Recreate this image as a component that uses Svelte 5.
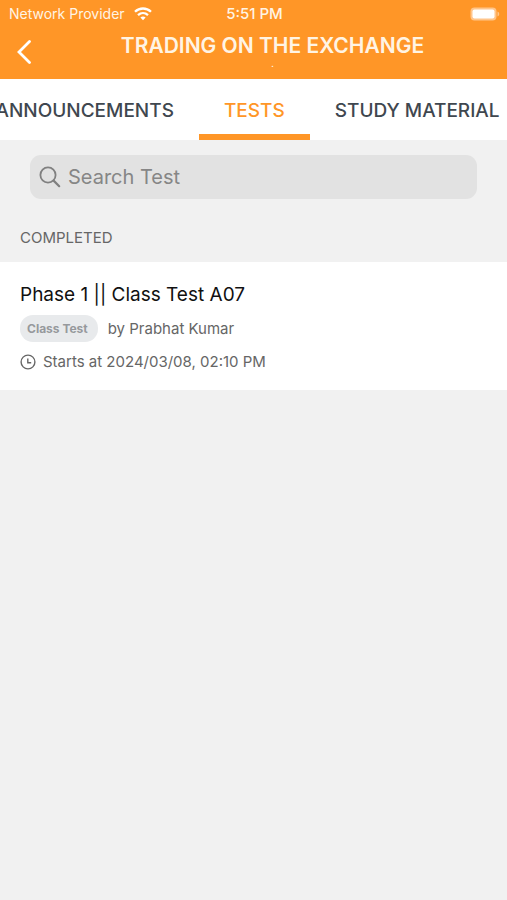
<script>
  let query = $state('')
  let active = $state('TESTS')

  const tabs = ['ANNOUNCEMENTS', 'TESTS', 'STUDY MATERIAL']

  const tests = [
    {
      title: 'Phase 1 || Class Test A07',
      kind: 'Class Test',
      author: 'Prabhat Kumar',
      starts: '2024/03/08, 02:10 PM'
    }
  ]
</script>

<div class="screen">
  <header>
    <div class="status">
      <div class="carrier">
        <span>Network Provider</span>
        <svg width="18" height="14" viewBox="0 0 18 14" aria-hidden="true">
          <g fill="none" stroke="currentColor" stroke-width="2.3">
            <path d="M1 4.8C5.5.4 12.5.4 17 4.8" />
            <path d="M4 8.1c2.9-2.7 7.1-2.7 10 0" />
          </g>
          <path fill="currentColor" d="M6.4 10.5c1.5-1.3 3.7-1.3 5.2 0L9 13.2z" />
        </svg>
      </div>
      <span class="time">5:51 PM</span>
      <svg class="battery" width="30" height="14" viewBox="0 0 30 14" aria-hidden="true">
        <rect x=".5" y=".5" width="26" height="13" rx="4" fill="#ffc58b" />
        <rect x="2.5" y="2.5" width="22" height="9" rx="2" fill="#fff" />
        <path d="M27.5 4.5c2.3 1 2.3 4 0 5z" fill="#ffc58b" />
      </svg>
    </div>
    <div class="bar">
      <button class="back" aria-label="Back">
        <svg width="16" height="24" viewBox="0 0 16 24" aria-hidden="true">
          <path d="M13.5 1.5 3 12l10.5 10.5" fill="none" stroke="currentColor" stroke-width="2.8" stroke-linecap="round" />
        </svg>
      </button>
      <div class="heading">
        <h1>TRADING ON THE EXCHANGE</h1>
        <span>.</span>
      </div>
    </div>
  </header>

  <nav>
    {#each tabs as tab}
      <button class:active={active === tab} onclick={() => { active = tab }}>{tab}</button>
    {/each}
  </nav>

  <main>
    <label class="search">
      <svg width="22" height="22" viewBox="0 0 22 22" aria-hidden="true">
        <g fill="none" stroke="currentColor" stroke-width="1.8" stroke-linecap="round">
          <circle cx="9" cy="9" r="7.6" />
          <path d="m14.6 14.6 5.6 5.6" stroke-width="2.2" />
        </g>
      </svg>
      <input type="text" placeholder="Search Test" aria-label="Search Test" bind:value={query} />
    </label>

    <h2>COMPLETED</h2>

    {#each tests as test}
      <article>
        <h3>{test.title}</h3>
        <div class="row">
          <span class="badge">{test.kind}</span>
          <span>by {test.author}</span>
        </div>
        <div class="row starts">
          <svg width="16" height="16" viewBox="0 0 16 16" aria-hidden="true">
            <g fill="none" stroke="currentColor" stroke-width="1.4">
              <circle cx="8" cy="8" r="6.9" />
              <path d="M7.8 4.6v4.1h3.4" />
            </g>
          </svg>
          <span>Starts at {test.starts}</span>
        </div>
      </article>
    {/each}
  </main>
</div>

<style>
  :global(body) {
    background: #f1f1f1;
  }

  .screen {
    font-family: Inter, 'Liberation Sans', sans-serif;
    overflow: hidden;
  }

  h1, h2, h3 {
    margin: 0;
    font-weight: 400;
  }

  button {
    font: inherit;
    border: 0;
    background: none;
    cursor: pointer;
  }

  svg {
    display: block;
    flex-shrink: 0;
  }

  header {
    background: #ff9627;
    color: #fff4e4;
  }

  .status {
    display: grid;
    grid-template-columns: 1fr auto 1fr;
    align-items: center;
    height: 27px;
    padding: 0 7px 0 9px;
    font-size: 14px;
  }

  .carrier {
    display: flex;
    align-items: center;
    gap: 9px;
  }

  .carrier svg {
    color: #fff;
  }

  .time {
    font-size: 15px;
    font-weight: 500;
  }

  .battery {
    justify-self: end;
  }

  .bar {
    display: flex;
    height: 52px;
    padding: 0 14px 3px;
    box-sizing: border-box;
  }

  .back {
    align-self: center;
    width: 24px;
    padding: 0 2px;
    color: #fff;
  }

  .heading {
    flex: 1;
    display: flex;
    flex-direction: column;
    align-items: center;
    padding-left: 14px;
    padding-top: 6px;
  }

  h1 {
    font-size: 21px;
    line-height: 26px;
    font-weight: 600;
    white-space: nowrap;
  }

  .heading span {
    font-size: 8px;
    line-height: 10px;
    font-weight: 600;
  }

  nav {
    display: flex;
    justify-content: center;
    padding-right: 12px;
    background: #fff;
  }

  nav button {
    flex-shrink: 0;
    height: 61px;
    padding: 7px 25px 0;
    border-bottom: 6px solid transparent;
    font-size: 19px;
    font-weight: 500;
    color: #3f474f;
  }

  nav .active {
    color: #ff9627;
    border-color: #ff9627;
  }

  .search {
    display: flex;
    align-items: center;
    gap: 7px;
    height: 44px;
    margin: 15px 30px 0;
    padding: 0 9px;
    border-radius: 11px;
    background: #e2e2e2;
    color: #808080;
  }

  input {
    flex: 1;
    min-width: 0;
    padding: 0;
    border: 0;
    outline: 0;
    background: none;
    font: inherit;
    font-size: 20px;
    color: #333;
  }

  input::placeholder {
    color: #868686;
    opacity: 1;
  }

  h2 {
    padding: 29px 20px 14px;
    font-size: 15px;
    line-height: 20px;
    color: #666;
  }

  article {
    padding: 21px 20px 17px;
    background: #fff;
  }

  h3 {
    font-size: 19px;
    line-height: 24px;
    color: #111;
  }

  .row {
    display: flex;
    align-items: center;
    gap: 10px;
    margin-top: 8px;
    font-size: 15px;
    line-height: 22px;
    color: #666;
  }

  .badge {
    padding: 0 10px 0 7px;
    border-radius: 13px;
    background: #e8eaec;
    font-size: 12px;
    line-height: 27px;
    font-weight: 700;
    color: #96999c;
  }

  .starts {
    margin-top: 9px;
    gap: 7px;
  }
</style>
